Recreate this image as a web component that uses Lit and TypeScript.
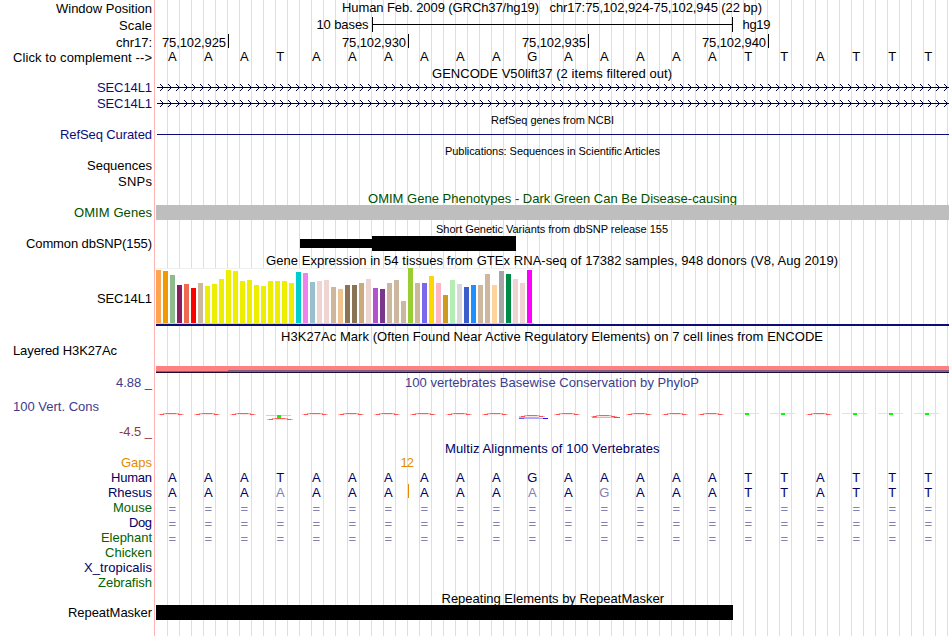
import { LitElement, html, svg, css, nothing, SVGTemplateResult } from 'lit';
import { customElement } from 'lit/decorators.js';

const LEFT = 156;
const RIGHT = 949;
const BASE = 36;

type Drawing = SVGTemplateResult | SVGTemplateResult[];

interface Row {
  height: number;
  label?: string;
  // distance from the row's top to the label's line box
  pad?: number;
  kind?: string;
  // drawn width of the label
  width?: number;
  body?: Drawing;
}

const text = (
  x: number,
  y: number,
  width: number,
  value: string,
  kind = '',
) => svg`<text class=${kind} x=${x} y=${y} textLength=${width}>${value}</text>`;

const rect = (x: number, y: number, w: number, h: number, fill = '#000') =>
  svg`<rect x=${x} y=${y} width=${w} height=${h} fill=${fill}></rect>`;

const title = (
  height: number,
  x: number,
  width: number,
  value: string,
  kind = '',
  baseline = 12,
): Row => ({
  height,
  body: text(x, baseline, width, value, kind),
});

const letters = (value: string, y: number, kind = '', faded: number[] = []) =>
  [...value].map(
    (c, i) =>
      svg`<text class="base ${kind} ${faded.includes(i) ? 'faded' : ''}" x=${172.3 + i * BASE} y=${y}>${c}</text>`,
  );

const HUMAN = 'AAATAAAAAAGAAAAATTATTT';
const RHESUS = 'AAAAAAAAAAAAGAAATTATTT';

const gene = (): Drawing => {
  const arrows = [];
  for (let x = 160; x < RIGHT - 3; x += 8) {
    arrows.push(`M${x} 4l3.5 3.5l-3.5 3.5`);
  }
  return svg`
    ${rect(157, 7, RIGHT - 157, 1, '#00003c')}
    <path d=${arrows.join('')} fill="none" stroke="#00003c"></path>
  `;
};

const ruler = (): Drawing =>
  [0, 1, 2, 3].map((i) => {
    const x = 228 + i * 5 * BASE;
    return svg`
      ${text(x - 66, 13, 64, `75,102,${925 + i * 5}`)}
      ${rect(x, 0, 1, 14)}
    `;
  });

// one [colour, height] pair for each GTEx tissue
const TISSUES: [string, number][] = [
  ['#ffa54f', 53],
  ['#ee9a00', 52],
  ['#8fbc8f', 48],
  ['#8b1c62', 38],
  ['#ee6a50', 39],
  ['#ff0000', 35],
  ['#cdb79e', 40],
  ['#eeee00', 37],
  ['#eeee00', 39],
  ['#eeee00', 44],
  ['#eeee00', 53],
  ['#eeee00', 52],
  ['#eeee00', 42],
  ['#eeee00', 43],
  ['#eeee00', 38],
  ['#eeee00', 37],
  ['#eeee00', 42],
  ['#eeee00', 42],
  ['#eeee00', 42],
  ['#eeee00', 40],
  ['#00cdcd', 51],
  ['#ee82ee', 50],
  ['#9ac0cd', 41],
  ['#eed5d2', 42],
  ['#eed5d2', 43],
  ['#cdb79e', 36],
  ['#eec591', 34],
  ['#8b7355', 38],
  ['#8b7355', 38],
  ['#cdaa7d', 40],
  ['#eed5d2', 44],
  ['#b452cd', 35],
  ['#7a378b', 34],
  ['#cdb79e', 40],
  ['#cdb79e', 43],
  ['#cdb79e', 22],
  ['#9acd32', 55],
  ['#cdb79e', 40],
  ['#7a67ee', 40],
  ['#ffd700', 47],
  ['#ffb6c1', 40],
  ['#cd9b1d', 28],
  ['#b4eeb4', 43],
  ['#d9d9d9', 39],
  ['#3a5fcd', 36],
  ['#1e90ff', 38],
  ['#cdb79e', 38],
  ['#cdb79e', 49],
  ['#ffd39b', 38],
  ['#a6a6a6', 52],
  ['#008b45', 49],
  ['#eed5d2', 44],
  ['#eed5d2', 40],
  ['#ff00ff', 53],
];

const expression = (): Drawing => svg`
  ${rect(LEFT, 1, 378, 56, '#fff')}
  ${rect(LEFT, 1, 378, 1, '#f0f0f0')}
  ${rect(LEFT, 56, 378, 1, '#d0d0d0')}
  ${TISSUES.map(([fill, h], i) => rect(LEFT + i * 7, 56 - h, 5, h, fill))}
  ${rect(LEFT, 57, RIGHT - LEFT, 2, '#0c0c78')}
`;

const acetylation = (): Drawing => svg`
  ${rect(LEFT, 23, RIGHT - LEFT, 5, '#ff8080')}
  ${rect(228, 27, RIGHT - 228, 1, '#806080')}
  ${rect(LEFT, 28, RIGHT - LEFT, 1, '#806080')}
  ${rect(LEFT, 29, RIGHT - LEFT, 1, '#1c0c38')}
`;

// r: shallow red arc, g: green mark, m: green over red, b and c: red over blue
const SCORES = 'rrrmrrrrrrbrcrrrggrggg';

const arc = (x: number, y: number) => svg`
  ${rect(x + 6, y + 1, 15, 1, '#ffe0e0')}
  ${rect(x, y + 1, 2, 1, '#ffb4b4')}
  ${rect(x + 2, y + 1, 4, 1, '#ff5050')}
  ${rect(x + 5, y, 3, 1, '#ff9c9c')}
  ${rect(x + 8, y, 10, 1, '#ff5c5c')}
  ${rect(x + 18, y, 3, 1, '#ff9c9c')}
  ${rect(x + 20, y + 1, 4, 1, '#ff5050')}
  ${rect(x + 24, y + 1, 2, 1, '#ffb4b4')}
`;

const conservation = (): Drawing =>
  [...SCORES].map((s, i) => {
    const x = 158 + i * BASE;
    switch (s) {
      case 'g':
        return svg`${rect(x, 23, 25, 1, '#c8f5c8')}${rect(x + 11, 23, 4, 2, '#0f0')}`;
      case 'm':
        return svg`${rect(x, 25, 25, 1, '#a8f0a8')}${arc(x + 1, 28)}${rect(x + 11, 25, 4, 3, '#0f0')}`;
      case 'b':
        return svg`
          ${arc(x + 1, 25)}
          ${rect(x + 1, 27, 20, 1, '#b0b0ff')}
          ${rect(x + 1, 28, 5, 1, '#6060ff')}
          ${rect(x + 6, 28, 19, 1, '#a8a8ff')}
          ${rect(x + 25, 28, 5, 1, '#1414ff')}
        `;
      case 'c':
        return svg`
          ${arc(x + 1, 25)}
          ${rect(x + 2, 27, 4, 1, '#9090ff')}
          ${rect(x + 6, 27, 18, 1, '#c0b8f0')}
          ${rect(x + 24, 27, 6, 1, '#6868ff')}
        `;
      default:
        return arc(x, 23);
    }
  });

const unaligned = letters('='.repeat(22), 13, 'gap');

const ROWS: Row[] = [
  {
    height: 17,
    label: 'Window Position',
    width: 96,
    pad: 1,
    body: text(
      342,
      12,
      420,
      'Human Feb. 2009 (GRCh37/hg19)   chr17:75,102,924-75,102,945 (22 bp)',
    ),
  },
  {
    height: 17,
    label: 'Scale',
    width: 33,
    pad: 1,
    body: svg`
      ${text(316.5, 12, 52, '10 bases')}
      ${rect(372, 0, 1, 15)}
      ${rect(372, 7, 361, 1)}
      ${rect(732, 0, 1, 15)}
      ${text(742.5, 12, 28, 'hg19')}
    `,
  },
  { height: 16, label: 'chr17:', width: 36, pad: 1, body: ruler() },
  {
    height: 16,
    label: 'Click to complement -->',
    width: 139,
    body: letters(HUMAN, 11),
  },
  title(14, 432, 240, 'GENCODE V50lift37 (2 items filtered out)'),
  { height: 16, label: 'SEC14L1', width: 55, kind: 'gene', body: gene() },
  { height: 16, label: 'SEC14L1', width: 55, kind: 'gene', body: gene() },
  title(15, 491, 123, 'RefSeq genes from NCBI', 'small'),
  {
    height: 16,
    label: 'RefSeq Curated',
    width: 92,
    kind: 'gene',
    body: rect(157, 7, RIGHT - 157, 1, '#0c0c78'),
  },
  title(
    15,
    445,
    215,
    'Publications: Sequences in Scientific Articles',
    'small',
  ),
  { height: 16, label: 'Sequences', width: 65 },
  { height: 16, label: 'SNPs', width: 34 },
  title(
    15,
    368,
    369,
    'OMIM Gene Phenotypes - Dark Green Can Be Disease-causing',
    'omim',
    13,
  ),
  {
    height: 16,
    label: 'OMIM Genes',
    width: 78,
    kind: 'omim',
    body: rect(LEFT, 0, RIGHT - LEFT, 15, '#bebebe'),
  },
  title(
    15,
    436,
    232,
    'Short Genetic Variants from dbSNP release 155',
    'small',
  ),
  {
    height: 16,
    label: 'Common dbSNP(155)',
    width: 126,
    body: svg`${rect(300, 3, 72, 9)}${rect(372, 0, 144, 15)}`,
  },
  title(
    15,
    266,
    572,
    'Gene Expression in 54 tissues from GTEx RNA-seq of 17382 samples, 948 donors (V8, Aug 2019)',
    '',
    13,
  ),
  { height: 61, label: 'SEC14L1', width: 55, pad: 24, body: expression() },
  title(
    15,
    281,
    542,
    'H3K27Ac Mark (Often Found Near Active Regulatory Elements) on 7 cell lines from ENCODE',
    '',
    13,
  ),
  {
    height: 30,
    label: 'Layered H3K27Ac',
    width: 104,
    kind: 'left',
    body: acetylation(),
  },
  {
    height: 17,
    label: '4.88 _',
    width: 36,
    pad: 2,
    kind: 'cons',
    body: text(
      405,
      14,
      294,
      '100 vertebrates Basewise Conservation by PhyloP',
      'cons',
    ),
  },
  {
    height: 34,
    label: '100 Vert. Cons',
    width: 86,
    pad: 9,
    kind: 'cons left',
    body: conservation(),
  },
  { height: 17, label: '-4.5 _', width: 33, kind: 'low' },
  title(14, 445, 214.5, 'Multiz Alignments of 100 Vertebrates', 'align'),
  {
    height: 15,
    label: 'Gaps',
    width: 31,
    kind: 'gaps',
    body: text(400.5, 12, 13.5, '12', 'gaps'),
  },
  {
    height: 15,
    label: 'Human',
    width: 41,
    kind: 'align',
    body: letters(HUMAN, 12, 'align'),
  },
  {
    height: 15,
    label: 'Rhesus',
    width: 44,
    kind: 'align',
    body: svg`
      ${letters(RHESUS, 12, 'align', [3, 10, 12])}
      ${rect(408, -1, 1, 14, '#e68a00')}
    `,
  },
  { height: 15, label: 'Mouse', width: 39, kind: 'species', body: unaligned },
  { height: 15, label: 'Dog', width: 23, kind: 'align', body: unaligned },
  {
    height: 15,
    label: 'Elephant',
    width: 51,
    kind: 'species',
    body: unaligned,
  },
  { height: 15, label: 'Chicken', width: 47, kind: 'species' },
  { height: 15, label: 'X_tropicalis', width: 68, kind: 'align' },
  { height: 15, label: 'Zebrafish', width: 54, kind: 'species' },
  title(15, 441.5, 222.5, 'Repeating Elements by RepeatMasker', '', 13),
  {
    height: 31,
    label: 'RepeatMasker',
    width: 84,
    body: rect(LEFT, 0, 577, 15),
  },
];

@customElement('app-root')
export class AppRoot extends LitElement {
  static styles = css`
    :host {
      display: block;
      width: 950px;
      height: 636px;
      overflow: hidden;
      font: 13px/15px 'Liberation Sans', Arial, sans-serif;
      color: #000;
      background: #fff;
    }

    .tracks {
      display: flex;
      flex-direction: column;
      height: 636px;
      background:
        linear-gradient(#ffb4b4, #ffb4b4) 154px 0 / 1px 100% no-repeat,
        repeating-linear-gradient(
            90deg,
            transparent 0 11px,
            #dcdcf8 11px 12px
          )
          156px 0 / 793px 100% no-repeat;
    }

    .row {
      display: flex;
      flex: none;
    }

    .label {
      box-sizing: border-box;
      width: 156px;
      padding-right: 4px;
      padding-left: 13px;
      display: flex;
      justify-content: flex-end;
      align-items: flex-start;
    }

    .label.left {
      justify-content: flex-start;
    }

    svg {
      display: block;
      flex: none;
      overflow: visible;
    }

    text {
      fill: currentColor;
      white-space: pre;
    }

    rect,
    path {
      shape-rendering: crispEdges;
    }

    .small {
      font-size: 11px;
    }

    .base {
      text-anchor: middle;
    }

    .gene {
      color: #0c0c78;
    }

    .omim {
      color: #005000;
    }

    .cons {
      color: #3c3c8c;
    }

    .low {
      color: #8c3c3c;
    }

    .align {
      color: #000064;
    }

    .species {
      color: #006400;
    }

    .gaps {
      color: #e68a00;
    }

    .gap,
    .faded {
      color: #8080b4;
    }
  `;

  private renderRow(row: Row) {
    return html`
      <div class="row" style="height: ${row.height}px">
        <div
          class="label ${row.kind ?? ''}"
          style="padding-top: ${row.pad ?? 0}px"
        >
          ${row.label
            ? html`<svg width=${row.width!} height="15">
                <text x="0" y="12" textLength=${row.width!}>${row.label}</text>
              </svg>`
            : nothing}
        </div>
        <svg
          width="794"
          height=${row.height}
          viewBox="${LEFT} 0 794 ${row.height}"
        >
          ${row.body ?? nothing}
        </svg>
      </div>
    `;
  }

  render() {
    return html`<div class="tracks">${ROWS.map((r) => this.renderRow(r))}</div>`;
  }
}

declare global {
  interface HTMLElementTagNameMap {
    'app-root': AppRoot;
  }
}
